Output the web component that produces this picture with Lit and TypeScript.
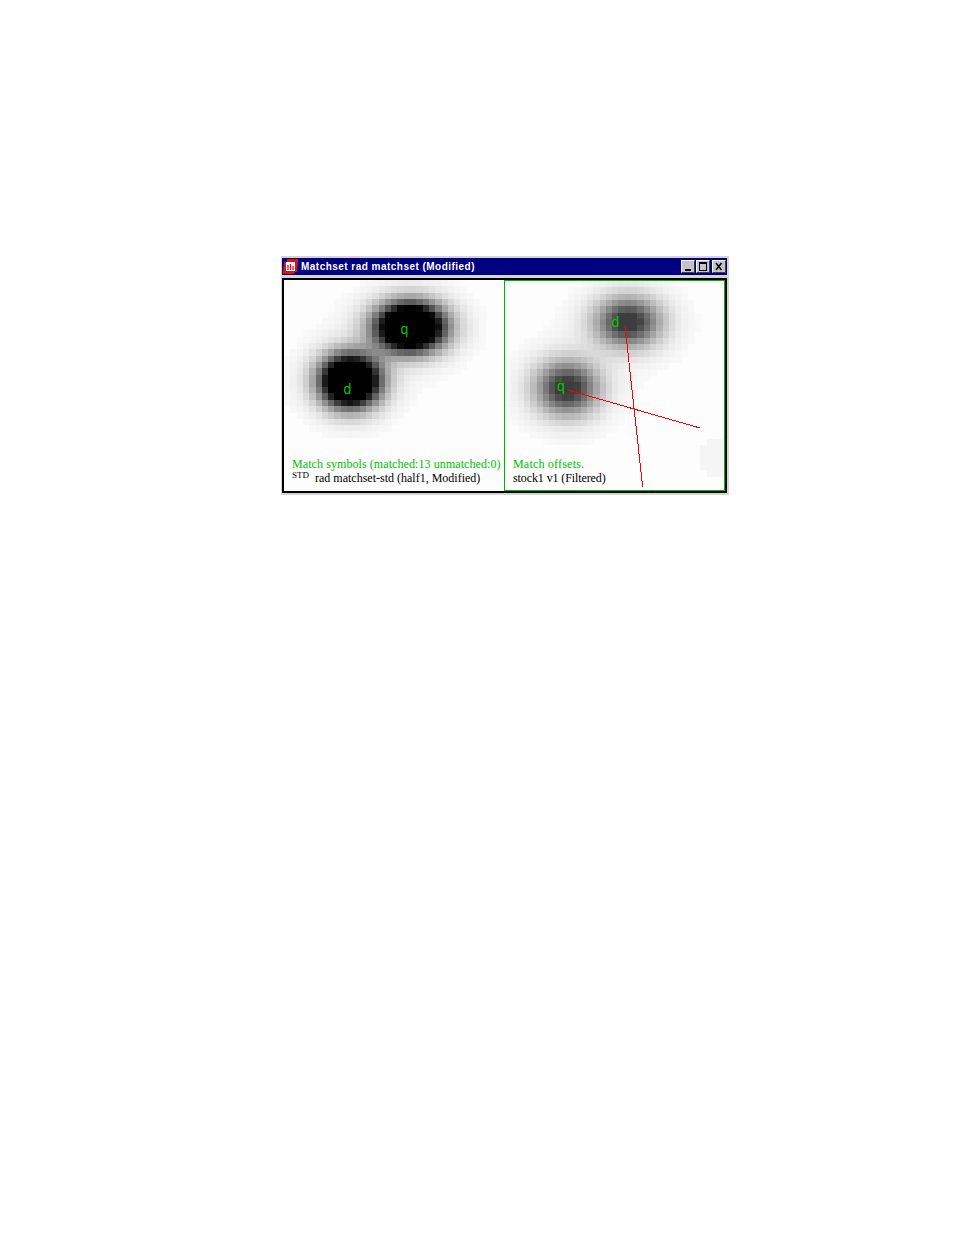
import { LitElement, html, css, svg } from "lit";
import { customElement } from "lit/decorators.js";

type Blob = { x: number; y: number; rx: number; ry: number };

const CELL = 6.3;

function field(w: number, h: number, blobs: Blob[], gain: number, cap: number, spread: number, patches: Blob[] = []) {
  const out: unknown[] = [];
  const cols = Math.ceil(w / CELL);
  const rows = Math.ceil(h / CELL);
  for (let j = 0; j < rows; j++) {
    for (let i = 0; i < cols; i++) {
      const px = (i + 0.5) * CELL;
      const py = (j + 0.5) * CELL;
      let d = 0;
      for (const b of blobs) {
        const r2 = ((px - b.x) / b.rx) ** 2 + ((py - b.y) / b.ry) ** 2;
        d += gain * Math.exp(-r2 / spread) + 0.045 * Math.exp(-r2 / 0.9);
      }
      for (const b of patches) {
        const r2 = ((px - b.x) / b.rx) ** 2 + ((py - b.y) / b.ry) ** 2;
        if (r2 < 1) d += 0.03;
      }
      d = Math.min(cap, d);
      if (d < 0.015) continue;
      const v = Math.round(253 * (1 - d));
      out.push(
        svg`<rect x=${i * CELL} y=${j * CELL} width=${CELL + 0.4} height=${CELL + 0.4} fill=${`rgb(${v},${v},${v})`}></rect>`
      );
    }
  }
  return out;
}

@customElement("app-root")
export class AppRoot extends LitElement {
  static styles = css`
    :host { display: block; width: 954px; height: 1235px; background: #fff; padding: 256px 0 0 281px; box-sizing: border-box; }
    .window { width: 448px; height: 239px; box-sizing: border-box; background: #d4d4d4; padding: 2px 2px 2px 1px; display: flex; flex-direction: column; }
    .title { height: 17px; flex: none; background: #000080; display: flex; align-items: center; padding: 0 1px 0 1px; gap: 3px; }
    .title-text { flex: 1; color: #fff; font: bold 10px "Liberation Sans", sans-serif; letter-spacing: 0.47px; white-space: nowrap; }
    .btns { display: flex; }
    .btn { width: 14px; height: 13px; background: #c4c4c4; box-sizing: border-box; border: 1px solid; border-color: #f4f4f4 #404040 #404040 #f4f4f4; display: block; }
    .btn.max { margin-left: 1px; }
    .btn.close { margin-left: 2px; }
    .frame { flex: 1; margin-top: 3px; border: 2px solid #000; display: flex; background: #fdfdfd; min-height: 0; }
    .pane { position: relative; display: flex; flex-direction: column; justify-content: flex-end; padding: 0 0 6px 8px; box-sizing: border-box; overflow: hidden; font: 12px/14px "Liberation Serif", serif; color: #000; }
    .left { width: 220px; }
    .right { flex: 1; border: 1px solid #00b400; padding-left: 8px; padding-bottom: 5px; }
    .art { position: absolute; left: 0; top: 0; }
    .line { position: relative; white-space: nowrap; }
    .green { color: #00c000; letter-spacing: 0.08px; }
    .offs { color: #00c000; letter-spacing: 0.2px; }
    .stock { letter-spacing: -0.1px; }
    .std { font-size: 9px; vertical-align: 4px; line-height: 9px; margin-right: 6px; }
    .mark { font: 14px "Liberation Sans", sans-serif; fill: #00c800; }
  `;

  render() {
    const left: Blob[] = [
      { x: 126, y: 47, rx: 66, ry: 47 },
      { x: 66, y: 101, rx: 57, ry: 50 },
    ];
    const right: Blob[] = [
      { x: 123, y: 41, rx: 60, ry: 46 },
      { x: 62, y: 107, rx: 58, ry: 50 },
    ];
    const patch: Blob[] = [{ x: 212, y: 176, rx: 18, ry: 20 }];
    return html`
      <div class="window">
        <div class="title">
          <svg width="15" height="15" viewBox="0 0 15 15">
            <path d="M4 0h11v3l-1 10h-2l-1 2H0v-3l1-9h3z" fill="#e01010"></path>
            <rect x="3" y="3" width="9" height="9" fill="#fff"></rect>
            <path d="M5 6v5M7.500 5v6M10 7v4" stroke="#e01010" stroke-width="1.300"></path>
          </svg>
          <span class="title-text">Matchset rad matchset (Modified)</span>
          <div class="btns">
            <svg class="btn" viewBox="0 0 12 11"><rect x="3" y="8" width="6" height="2" fill="#000"></rect></svg>
            <svg class="btn max" viewBox="0 0 12 11"><rect x="2.500" y="1.500" width="7" height="8" fill="none" stroke="#000"></rect><rect x="2" y="1" width="8" height="2" fill="#000"></rect></svg>
            <svg class="btn close" viewBox="0 0 12 11"><path d="M3 2l5.500 7M8.500 2l-5.500 7" stroke="#000" stroke-width="1.600"></path></svg>
          </div>
        </div>
        <div class="frame">
          <div class="pane left">
            <svg class="art" width="220" height="212" shape-rendering="crispEdges">
              ${field(220, 212, left, 1.95, 1, 0.24)}
              <text class="mark" x="116.500" y="54">q</text>
              <text class="mark" x="59.500" y="114">d</text>
            </svg>
            <div class="line green">Match symbols (matched:13 unmatched:0)</div>
            <div class="line"><span class="std">STD</span>rad matchset-std (half1, Modified)</div>
          </div>
          <div class="pane right">
            <svg class="art" width="221" height="212" shape-rendering="crispEdges">
              ${field(221, 212, right, 0.8, 0.76, 0.27, patch)}
              <text class="mark" x="106.500" y="46">d</text>
              <text class="mark" x="52" y="110">q</text>
              <g fill="none" stroke="#ff0000" stroke-width="1">
                <path d="M120 45L137.700 206"></path>
                <path d="M63 109L195 147"></path>
              </g>
            </svg>
            <div class="line offs">Match offsets.</div>
            <div class="line stock">stock1 v1 (Filtered)</div>
          </div>
        </div>
      </div>
    `;
  }
}
